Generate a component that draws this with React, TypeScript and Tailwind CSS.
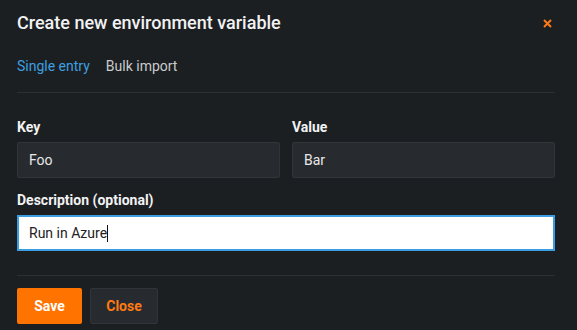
import React from "react";

export default function App() {
  return (
    <div
      className="w-[577px] h-[330px] bg-[#1b1f22] pl-[17px] pr-[22px] overflow-hidden"
      style={{ fontFamily: "Roboto, 'Liberation Sans', sans-serif" }}
    >
      <div className="flex items-center justify-between pt-[11px] h-[35px]">
        <h1 className="text-[18px] leading-[24px] text-[#f2f2f2] font-medium">
          Create new environment variable
        </h1>
        <svg width="9" height="9" viewBox="0 0 9 9" className="mr-[3px] mt-[1px]">
          <path d="M1 1 L8 8 M8 1 L1 8" stroke="#ff7a14" strokeWidth="2" />
        </svg>
      </div>
      <div className="flex gap-[16px] mt-[21px] text-[14px] leading-[20px]">
        <span className="text-[#3d9fe0]">Single entry</span>
        <span className="text-[#c9cbcd]">Bulk import</span>
      </div>
      <div className="mt-[16px] h-px bg-[#2c3034]" />
      <div className="grid grid-cols-2 gap-x-[12px] mt-[24px]">
        <div>
          <div className="text-[14px] leading-[20px] font-bold text-[#f2f2f2]">Key</div>
          <div className="mt-[5px] h-[36px] bg-[#272b2f] border border-[#30353a] rounded-[2px] flex items-center text-[14px] text-[#e8e8e8]">
            <span className="pl-[11px]">Foo</span>
          </div>
        </div>
        <div>
          <div className="text-[14px] leading-[20px] font-bold text-[#f2f2f2]">Value</div>
          <div className="mt-[5px] h-[36px] bg-[#272b2f] border border-[#30353a] rounded-[2px] flex items-center text-[14px] text-[#e8e8e8]">
            <span className="pl-[11px]">Bar</span>
          </div>
        </div>
      </div>
      <div className="mt-[12px] text-[14px] leading-[20px] font-bold text-[#f2f2f2]">
        Description (optional)
      </div>
      <div className="mt-[5px] h-[36px] bg-white border-2 border-[#3a9fe2] flex items-center text-[14px] text-[#222]">
        <span className="pl-[10px]">Run in Azure</span>
        <span className="inline-block w-px h-[17px] bg-[#111]" />
      </div>
      <div className="mt-[24px] h-px bg-[#2c3034]" />
      <div className="flex gap-[8px] mt-[12px]">
        <button className="h-[36px] w-[65px] bg-[#ff7300] rounded-[2px] text-white text-[14px] font-bold">
          Save
        </button>
        <button className="h-[36px] w-[68px] bg-[#272b2f] border border-[#30353a] rounded-[2px] text-[#ff7a14] text-[14px] font-bold">
          Close
        </button>
      </div>
    </div>
  );
}
